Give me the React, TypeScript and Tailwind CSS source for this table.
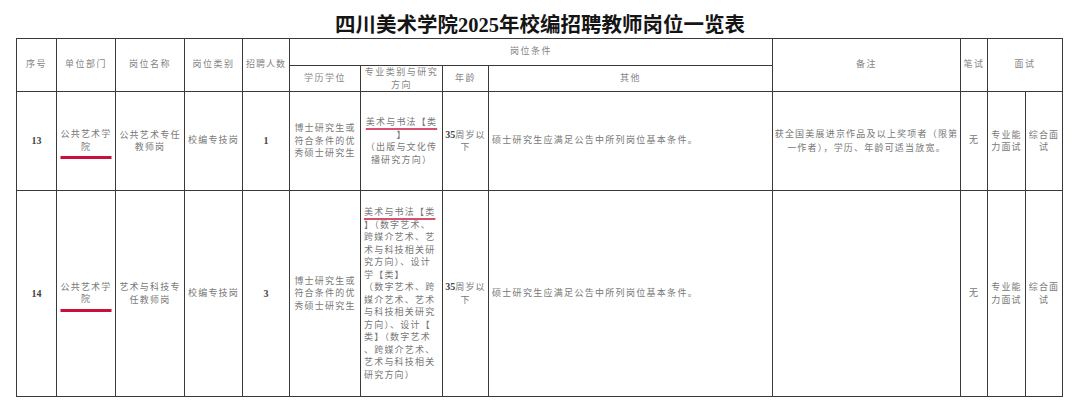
import React from 'react'

const font = "font-['Liberation_Serif','Noto_Sans_CJK_SC',serif]"

function Lines({ lines, className = '' }: { lines: React.ReactNode[]; className?: string }) {
  return (
    <div className={`leading-[12.5px] whitespace-nowrap ${className}`}>
      {lines.map((line, i) => (
        <div key={i}>{line}</div>
      ))}
    </div>
  )
}

function Th({
  children,
  rowSpan,
  colSpan,
  className = '',
}: {
  children?: React.ReactNode
  rowSpan?: number
  colSpan?: number
  className?: string
}) {
  return (
    <th
      rowSpan={rowSpan}
      colSpan={colSpan}
      className={`border border-[#3a3a3a] p-0 text-center align-middle text-[9px] font-normal tracking-[1.5px] text-[#858585] ${className}`}
    >
      {children}
    </th>
  )
}

function Td({ children, className = '' }: { children?: React.ReactNode; className?: string }) {
  return (
    <td className={`border border-[#3a3a3a] p-0 text-center align-middle text-[9px] tracking-[1.2px] text-[#787878] ${className}`}>
      {children}
    </td>
  )
}

function Num({ children }: { children: React.ReactNode }) {
  return <span className="text-[10px] font-bold tracking-normal text-[#444]">{children}</span>
}

function Unit() {
  return (
    <div className="relative inline-block">
      <Lines lines={['公共艺术学', '院']} />
      <div className="absolute left-1/2 top-full mt-[3px] h-[3px] w-[51px] -translate-x-1/2 bg-[#c8103a]" />
    </div>
  )
}

const first = (
  <span className="underline decoration-[#d9506e] decoration-[1.5px] underline-offset-[3px]">美术与书法【类</span>
)

const majors14 = [
  first,
  '】（数字艺术、',
  '跨媒介艺术、艺',
  '术与科技相关研',
  '究方向）、设计',
  '学【类】',
  '（数字艺术、跨',
  '媒介艺术、艺术',
  '与科技相关研究',
  '方向）、设计【',
  '类】（数字艺术',
  '、跨媒介艺术、',
  '艺术与科技相关',
  '研究方向）',
]

const degree = ['博士研究生或', '符合条件的优', '秀硕士研究生']
const other = '硕士研究生应满足公告中所列岗位基本条件。'

export default function App() {
  return (
    <div className={`h-[417px] w-[1080px] overflow-hidden bg-white ${font}`}>
      <div className="h-[38px] pt-[12px] text-center text-[20.5px] font-bold leading-[26px] text-[#151515]">
        四川美术学院2025年校编招聘教师岗位一览表
      </div>
      <table className="ml-[16px] w-[1046px] table-fixed border-collapse">
        <colgroup>
          <col className="w-[40px]" />
          <col className="w-[59px]" />
          <col className="w-[69px]" />
          <col className="w-[58px]" />
          <col className="w-[47px]" />
          <col className="w-[71px]" />
          <col className="w-[82px]" />
          <col className="w-[46px]" />
          <col className="w-[284px]" />
          <col className="w-[188px]" />
          <col className="w-[27px]" />
          <col className="w-[38px]" />
          <col className="w-[37px]" />
        </colgroup>
        <thead>
          <tr className="h-[27px]">
            <Th rowSpan={2}>序号</Th>
            <Th rowSpan={2}>单位部门</Th>
            <Th rowSpan={2}>岗位名称</Th>
            <Th rowSpan={2}>岗位类别</Th>
            <Th rowSpan={2} className="tracking-[1px]">招聘人数</Th>
            <Th colSpan={4}>岗位条件</Th>
            <Th rowSpan={2}>备注</Th>
            <Th rowSpan={2} className="tracking-[0px]">笔试</Th>
            <Th rowSpan={2} colSpan={2}>面试</Th>
          </tr>
          <tr className="h-[26px]">
            <Th>学历学位</Th>
            <Th>
              <Lines lines={['专业类别与研究', '方向']} className="leading-[11.5px]" />
            </Th>
            <Th>年龄</Th>
            <Th>其他</Th>
          </tr>
        </thead>
        <tbody>
          <tr className="h-[99px]">
            <Td>
              <Num>13</Num>
            </Td>
            <Td>
              <Unit />
            </Td>
            <Td>
              <Lines lines={['公共艺术专任', '教师岗']} />
            </Td>
            <Td>校编专技岗</Td>
            <Td>
              <Num>1</Num>
            </Td>
            <Td>
              <Lines lines={degree} />
            </Td>
            <Td>
              <Lines lines={[first, '】', '（出版与文化传', '播研究方向）']} />
            </Td>
            <Td className="tracking-[0.5px]">
              <Lines lines={[<><Num>35</Num>周岁以</>, '下']} />
            </Td>
            <Td className="pl-[3px] text-left tracking-[1.3px]">{other}</Td>
            <Td className="tracking-[0.5px]">
              <Lines lines={['获全国美展进京作品及以上奖项者（限第', '一作者），学历、年龄可适当放宽。']} className="leading-[14px]" />
            </Td>
            <Td>无</Td>
            <Td className="tracking-[0.5px]">
              <Lines lines={['专业能', '力面试']} />
            </Td>
            <Td className="tracking-[0.5px]">
              <Lines lines={['综合面', '试']} />
            </Td>
          </tr>
          <tr className="h-[206px]">
            <Td>
              <Num>14</Num>
            </Td>
            <Td>
              <Unit />
            </Td>
            <Td>
              <Lines lines={['艺术与科技专', '任教师岗']} />
            </Td>
            <Td>校编专技岗</Td>
            <Td>
              <Num>3</Num>
            </Td>
            <Td>
              <Lines lines={degree} />
            </Td>
            <Td className="pl-[3px] text-left">
              <Lines lines={majors14} />
            </Td>
            <Td className="tracking-[0.5px]">
              <Lines lines={[<><Num>35</Num>周岁以</>, '下']} />
            </Td>
            <Td className="pl-[3px] text-left tracking-[1.3px]">{other}</Td>
            <Td />
            <Td>无</Td>
            <Td className="tracking-[0.5px]">
              <Lines lines={['专业能', '力面试']} />
            </Td>
            <Td className="tracking-[0.5px]">
              <Lines lines={['综合面', '试']} />
            </Td>
          </tr>
        </tbody>
      </table>
    </div>
  )
}
